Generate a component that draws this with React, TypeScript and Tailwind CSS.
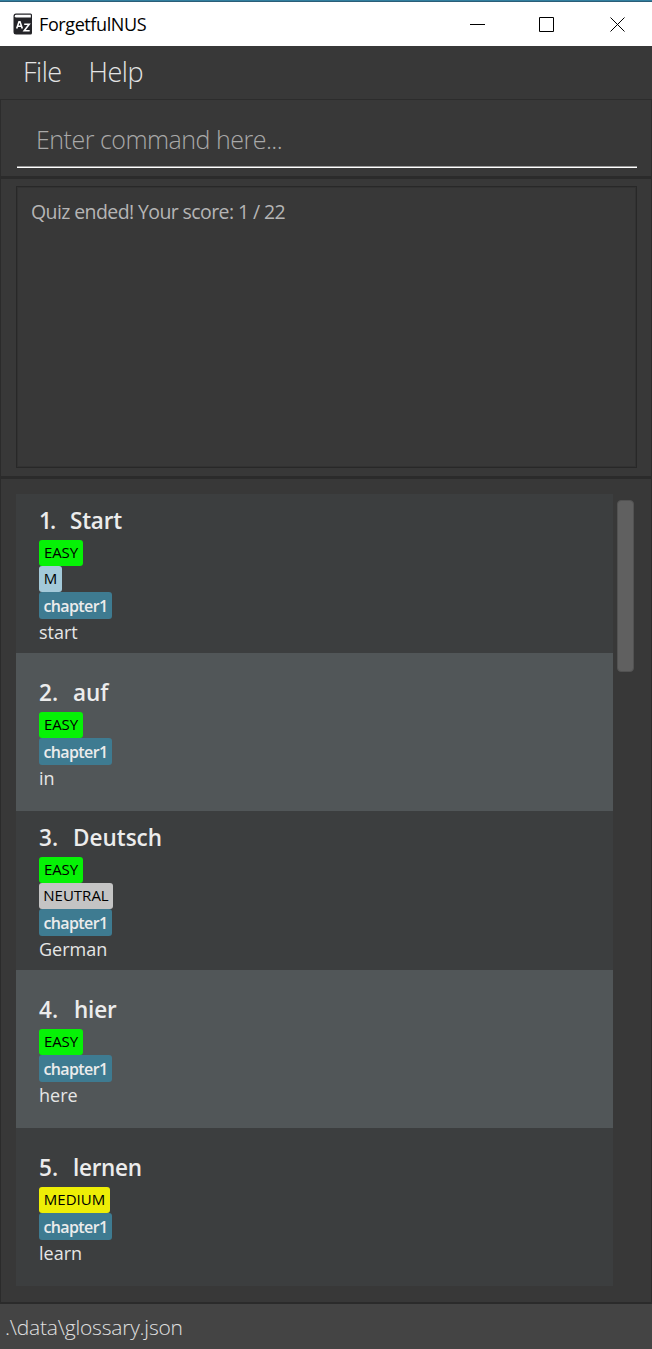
import React from "react";

type Tag = { text: string; kind: "easy" | "medium" | "gender" | "neutral" | "chapter"; size: string };
type Entry = { id: number; idClass: string; word: string; wordClass: string; tags: Tag[]; meaning: string; row: string };

const easy: Tag = { text: "EASY", kind: "easy", size: "w-[44px] tracking-[-0.1px]" };
const chapter: Tag = { text: "chapter1", kind: "chapter", size: "w-[73px] tracking-[-0.6px]" };

const entries: Entry[] = [
  {
    id: 1, idClass: "w-[31px] tracking-[-2px]", word: "Start", wordClass: "tracking-[-0.2px]",
    tags: [easy, { text: "M", kind: "gender", size: "w-[23px]" }, chapter],
    meaning: "start", row: "h-[159px] pt-[10px] bg-[#3c3e3f]",
  },
  {
    id: 2, idClass: "w-[34px]", word: "auf", wordClass: "", tags: [easy, chapter],
    meaning: "in", row: "h-[158px] pt-[23px] bg-[#515658]",
  },
  {
    id: 3, idClass: "w-[34px]", word: "Deutsch", wordClass: "",
    tags: [easy, { text: "NEUTRAL", kind: "neutral", size: "w-[74px]" }, chapter],
    meaning: "German", row: "h-[159px] pt-[10px] bg-[#3c3e3f]",
  },
  {
    id: 4, idClass: "w-[35px]", word: "hier", wordClass: "tracking-[-0.2px]", tags: [easy, chapter],
    meaning: "here", row: "h-[158px] pt-[23px] bg-[#515658]",
  },
  {
    id: 5, idClass: "w-[34px]", word: "lernen", wordClass: "tracking-[-0.3px]",
    tags: [{ text: "MEDIUM", kind: "medium", size: "w-[71px]" }, chapter],
    meaning: "learn", row: "h-[158px] pt-[23px] bg-[#3c3e3f]",
  },
];

const tagColors = {
  easy: "bg-[#06f206] text-black h-[26px] pb-[2px] text-[15px] font-medium",
  medium: "bg-[#eeee06] text-black h-[26px] pb-[2px] text-[15px] font-medium",
  gender: "bg-[#a3c9d9] text-black h-[26px] pb-[2px] text-[15px] font-medium",
  neutral: "bg-[#c4c4c4] text-black h-[26px] pb-[2px] text-[15px] font-medium",
  chapter: "bg-[#3e7b91] text-[#ececec] h-[27px] text-[16px] font-semibold",
};

function BookIcon() {
  return (
    <svg width="20" height="22" viewBox="0 0 20 22" className="shrink-0">
      <path d="M3 0.5H17.5Q19 0.5 19 2V20Q19 21.5 17.5 21.5H3Q0.5 21.5 0.5 19V3Q0.5 0.5 3 0.5Z" fill="#242428" />
      <path d="M3.2 1.8H17.8V4.6H3.2Q1.8 4.6 1.8 3.2Q1.8 1.8 3.2 1.8Z" fill="#fff" />
      <path d="M3.7 15.5L6 8.7H7L9.3 15.5M4.5 13.2H8.5M11.2 11.2H16.2L11.2 17.7H16.7" fill="none" stroke="#fff" strokeWidth="1.6" />
    </svg>
  );
}

function EntryRow({ entry }: { entry: Entry }) {
  return (
    <li className={`flex flex-col items-start pl-[23px] ${entry.row}`}>
      <h2 className="flex h-[36px] items-center pb-[2px] text-[22.5px] leading-[32px] font-semibold text-[#ececec]">
        <span className={entry.idClass}>{entry.id}.</span>
        <span className={entry.wordClass}>{entry.word}</span>
      </h2>
      {entry.tags.map((tag) => (
        <span
          key={tag.text}
          className={`flex items-center justify-center rounded-[3px] whitespace-nowrap ${tagColors[tag.kind]} ${tag.size}`}
        >
          {tag.text}
        </span>
      ))}
      <p className="text-[18px] leading-[27px] text-[#e6e6e6]">{entry.meaning}</p>
    </li>
  );
}

export default function App() {
  return (
    <div className="flex h-[1349px] w-[652px] flex-col overflow-hidden bg-[#383838] font-['Open_Sans','Noto_Sans',sans-serif] [font-stretch:92%]">
      <div className="h-[2px] shrink-0 border-b border-[#2b5e78] bg-[#327f9f]" />
      <header className="flex h-[44px] shrink-0 items-center bg-white pl-[13px] text-black">
        <BookIcon />
        <span className="ml-[6px] text-[18px] tracking-[-0.4px]">ForgetfulNUS</span>
        <svg width="155" height="16" viewBox="0 0 155 16" className="mr-[27px] ml-auto" fill="none" stroke="#000" strokeWidth="1">
          <path d="M0 8.5H15" />
          <path d="M69.5 1.5H83.5V15.5H69.5Z" />
          <path d="M140.5 1.5L154.5 15.5M154.5 1.5L140.5 15.5" />
        </svg>
      </header>
      <nav className="flex h-[53px] shrink-0 items-center gap-[27px] pl-[23px] text-[27px] font-light tracking-[-0.5px] text-[#e4e4e4]">
        <span>File</span>
        <span>Help</span>
      </nav>
      <section className="h-[77px] shrink-0 border-x border-t border-[#2c2c2c] pr-[14px] pl-[16px]">
        <div className="flex h-[68px] items-center border-b border-b-white pt-[12px] pl-[19px] text-[25px] font-light tracking-[-0.5px] text-[#a9a9a9] shadow-[inset_0_-1px_0_#999999]">
          Enter command here...
        </div>
      </section>
      <section className="h-[300px] shrink-0 border-x border-t-[3px] border-[#2b2b2b] pt-[7px] pr-[14px] pl-[15px]">
        <div className="h-[282px] border border-[#282828] px-[14px] pt-[11px] text-[19.5px] leading-[27px] tracking-[-0.6px] text-[#b5b5b5] shadow-[inset_0_0_0_1px_#323232]">
          Quiz ended! Your score: 1 / 22
        </div>
      </section>
      <main className="flex h-[826px] shrink-0 border-x border-t-[3px] border-[#2b2b2b] pt-[15px] pl-[15px]">
        <ul className="w-[597px]">
          {entries.map((entry) => (
            <EntryRow key={entry.id} entry={entry} />
          ))}
        </ul>
        <div className="mt-[6px] ml-[4px] h-[172px] w-[17px] rounded-[4px] border border-[#525252] bg-[#606060]" />
      </main>
      <footer className="flex grow items-center border-t-2 border-[#2b2b2b] bg-[#444444] pt-[2px] pl-[5px] text-[21px] font-light tracking-[-0.2px] text-[#e0e0e0]">
        .\data\glossary.json
      </footer>
    </div>
  );
}
